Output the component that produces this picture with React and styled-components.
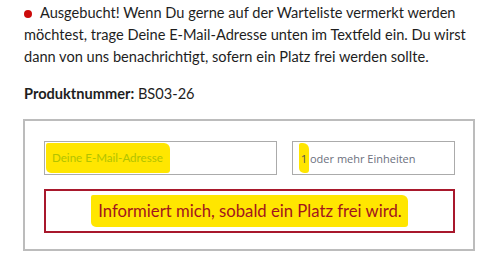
import React from "react";
import styled, { createGlobalStyle } from "styled-components";

const GlobalStyle = createGlobalStyle`
  html, body {
    margin: 0;
    padding: 0;
    background: #fff;
  }
  body {
    font-family: Lato, "Open Sans", sans-serif;
    color: #222;
  }
`;

const Page = styled.div`
  width: 452px;
  padding: 2px 0 0 23px;
`;

const Notice = styled.p`
  margin: 0;
  padding-left: 1px;
  font-size: 14.6px;
  line-height: 22px;
  white-space: nowrap;
  color: #1e1e1e;
`;

const Dot = styled.span`
  display: inline-block;
  width: 8px;
  height: 8px;
  border-radius: 50%;
  background: #cc0a0a;
  margin: 0 8px 1px 0;
  vertical-align: middle;
`;

const ProductNumber = styled.p`
  margin: 15px 0 0;
  padding-left: 1px;
  font-size: 14.6px;
  line-height: 22px;
  color: #1e1e1e;

  b {
    font-weight: 700;
  }
`;

const Box = styled.div`
  box-sizing: border-box;
  width: 452px;
  margin-top: 14px;
  border: 2px solid #bcbcbc;
  padding: 20px 18px 16px 19px;
  display: flex;
  flex-direction: column;
  gap: 14px;
`;

const InputRow = styled.div`
  display: flex;
  gap: 15px;
`;

const Field = styled.div`
  box-sizing: border-box;
  height: 34px;
  border: 1px solid #ababab;
  padding: 1px;
  display: flex;
  align-items: center;
  width: ${p => (p.wide ? "233px" : "auto")};
  flex: ${p => (p.wide ? "none" : "1")};
  background: #fff;
`;

const Marker = styled.span`
  display: inline-block;
  background: #ffe600;
  border-radius: 2px 6px 3px 5px;
`;

const Placeholder = styled(Marker)`
  height: 30px;
  line-height: 30px;
  padding: 0 7px 0 6px;
  font-size: 11.6px;
  color: #b2c300;
`;

const Quantity = styled(Marker)`
  height: 30px;
  line-height: 31px;
  width: 10px;
  margin-left: 5px;
  text-align: center;
  font-family: "Open Sans", sans-serif;
  font-size: 11.5px;
  color: #555;
`;

const Units = styled.span`
  margin-left: 1px;
  font-family: "Open Sans", sans-serif;
  font-size: 11px;
  color: #6b6f7d;
`;

const Button = styled.button`
  box-sizing: border-box;
  height: 44px;
  width: 100%;
  border: 2px solid #a8182c;
  background: #fff;
  display: flex;
  align-items: center;
  justify-content: center;
  padding: 0;
  cursor: pointer;
`;

const ButtonLabel = styled(Marker)`
  height: 32px;
  line-height: 32px;
  padding: 0 6px 0 7px;
  font-family: Lato, sans-serif;
  font-size: 16.7px;
  color: #a2141e;
`;

const App = () => (
  <Page>
    <GlobalStyle />
    <Notice>
      <Dot />
      Ausgebucht! Wenn Du gerne auf der Warteliste vermerkt werden
      <br />
      möchtest, trage Deine E-Mail-Adresse unten im Textfeld ein. Du wirst
      <br />
      dann von uns benachrichtigt, sofern ein Platz frei werden sollte.
    </Notice>
    <ProductNumber>
      <b>Produktnummer:</b> BS03-26
    </ProductNumber>
    <Box>
      <InputRow>
        <Field wide>
          <Placeholder>Deine E-Mail-Adresse</Placeholder>
        </Field>
        <Field>
          <Quantity>1</Quantity>
          <Units>oder mehr Einheiten</Units>
        </Field>
      </InputRow>
      <Button>
        <ButtonLabel>Informiert mich, sobald ein Platz frei wird.</ButtonLabel>
      </Button>
    </Box>
  </Page>
);

export default App;
